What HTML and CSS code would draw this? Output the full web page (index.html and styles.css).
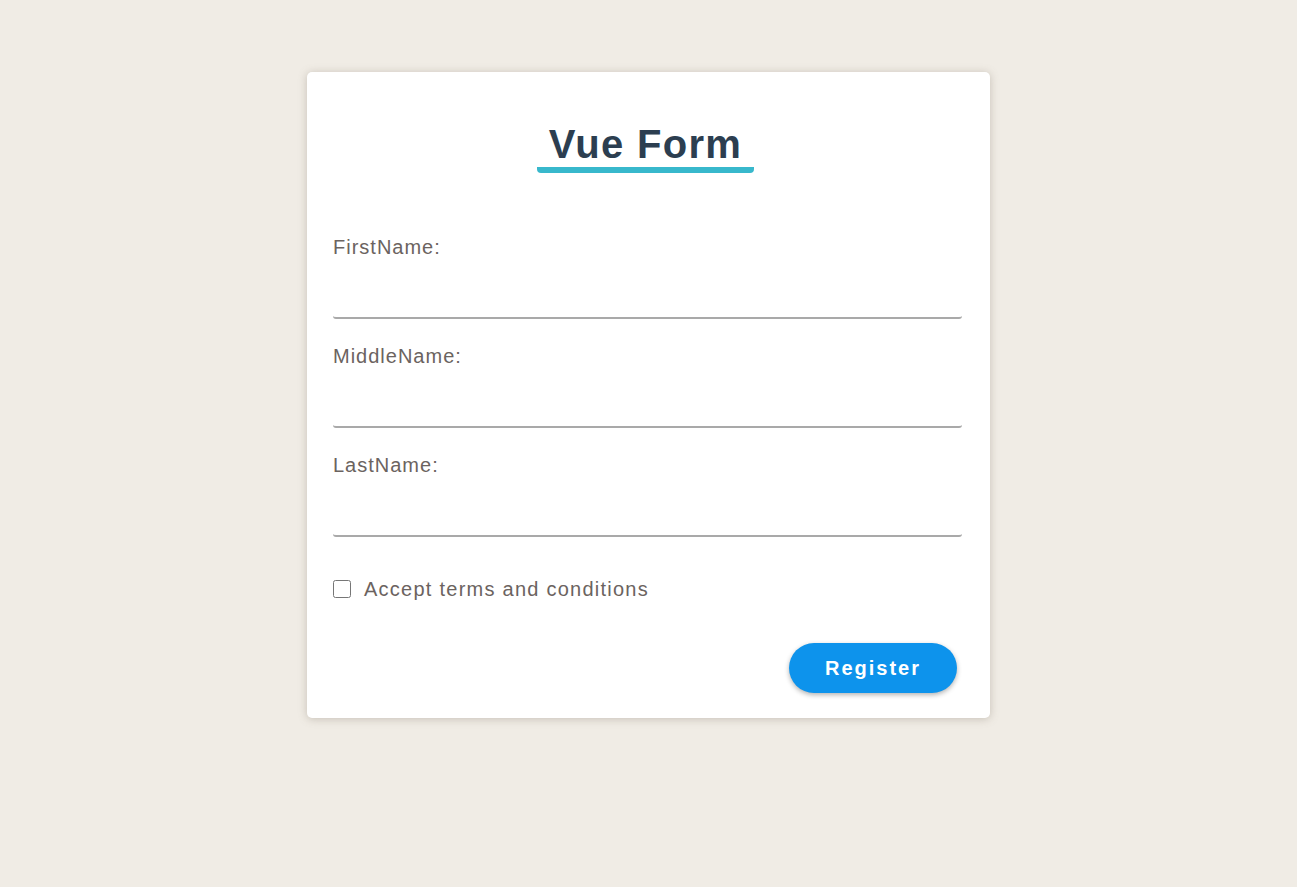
FILE: index.html
```html
<!DOCTYPE html>
<html lang="en">
<head>
<meta charset="utf-8">
<title>Vue Form</title>
<link rel="stylesheet" href="styles.css">
</head>
<body>
  <div class="card">
    <div class="title-wrap"><h1 class="title">Vue Form</h1></div>
    <form class="form">
      <div class="field">
        <label class="label" for="fn">FirstName:</label>
        <input class="input" id="fn" type="text">
      </div>
      <div class="field">
        <label class="label" for="mn">MiddleName:</label>
        <input class="input" id="mn" type="text">
      </div>
      <div class="field">
        <label class="label" for="ln">LastName:</label>
        <input class="input" id="ln" type="text">
      </div>
      <label class="check">
        <input class="checkbox" type="checkbox">
        <span>Accept terms and conditions</span>
      </label>
      <div class="actions">
        <button class="btn" type="button">Register</button>
      </div>
    </form>
  </div>
</body>
</html>
```
FILE: styles.css
```css
html, body {
  margin: 0;
  padding: 0;
}
body {
  background: #f0ece5;
  font-family: "Liberation Sans", Arial, sans-serif;
  min-height: 887px;
}
.card {
  width: 683px;
  box-sizing: border-box;
  margin: 72px auto 0;
  background: #fff;
  border-radius: 5px;
  box-shadow: 0 1px 8px rgba(120, 110, 95, 0.35);
  padding: 49px 28px 25px 26px;
}
.title-wrap {
  text-align: center;
}
.title {
  display: inline-block;
  margin: 0 4px 0 0;
  padding: 0 12px 0 12px;
  font-size: 40px;
  line-height: 46px;
  font-weight: 700;
  color: #2c3e50;
  letter-spacing: 1.3px;
  border-bottom: 6px solid #38b8cc;
  border-radius: 0 0 4px 4px;
}
.form {
  display: flex;
  flex-direction: column;
  margin-top: 62px;
}
.field {
  display: flex;
  flex-direction: column;
  margin-bottom: 25px;
}
.label {
  font-size: 20px;
  line-height: 24px;
  letter-spacing: 1px;
  color: #6b6360;
}
.input {
  height: 60px;
  box-sizing: border-box;
  border: none;
  border-bottom: 2px solid #a9a9a9;
  border-radius: 3px;
  outline: none;
  padding: 0;
  font-size: 18px;
  font-family: inherit;
  background: transparent;
}
.check {
  display: flex;
  align-items: center;
  gap: 13px;
  margin-top: 15px;
  font-size: 20px;
  line-height: 24px;
  letter-spacing: 1.25px;
  color: #6b6360;
}
.checkbox {
  width: 18px;
  height: 18px;
  margin: 0;
}
.actions {
  display: flex;
  justify-content: flex-end;
  margin-top: 42px;
  padding-right: 5px;
}
.btn {
  width: 168px;
  height: 50px;
  border: none;
  border-radius: 25px;
  background: #0d93ec;
  color: #fff;
  font-family: "Liberation Sans", Arial, sans-serif;
  font-size: 20px;
  font-weight: 700;
  letter-spacing: 2px;
  box-shadow: 0 2px 5px rgba(0, 0, 0, 0.3);
  cursor: pointer;
}
```
